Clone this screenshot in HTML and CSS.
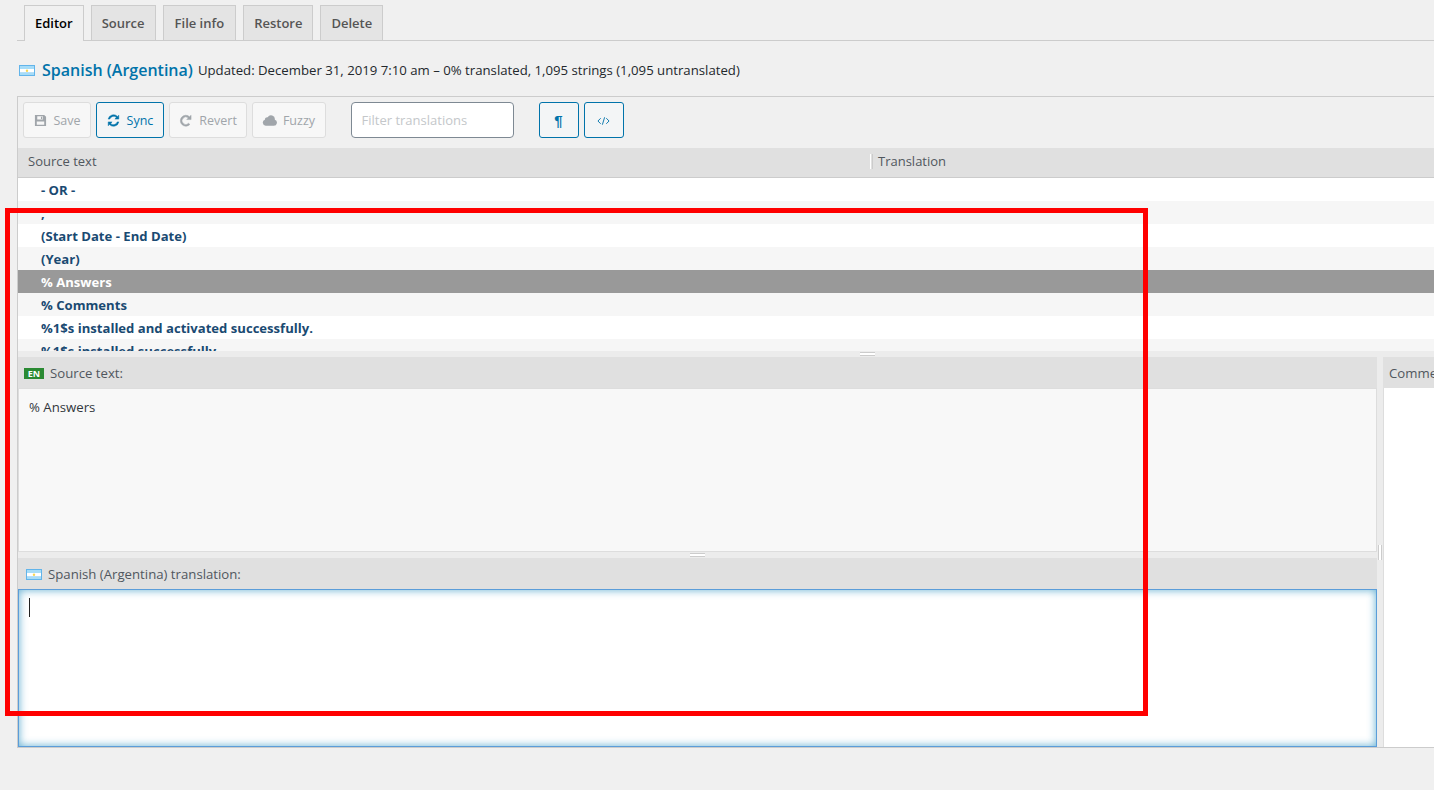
FILE: index.html
```html
<!DOCTYPE html>
<html lang="en">
<head>
    <meta charset="UTF-8">
    <meta name="viewport" content="width=device-width, initial-scale=1.0">
    <title>Edit translation</title>
    <link rel="stylesheet" href="styles.css">
</head>
<body>

<svg class="defs" width="0" height="0">
    <symbol id="flag-ar" viewBox="0 0 16 11">
        <rect width="16" height="11" fill="#62b4ea"/>
        <rect x="1" y="1" width="14" height="3" fill="#a6dcf8"/>
        <rect x="1" y="4" width="14" height="3.6" fill="#fff"/>
        <rect x="1" y="7.600" width="14" height="2.400" fill="#a6dcf8"/>
        <circle cx="8" cy="5.700" r="1.200" fill="#f7d654"/>
    </symbol>
</svg>

<nav class="tabs">
    <a class="tab active">Editor</a>
    <a class="tab">Source</a>
    <a class="tab wide">File info</a>
    <a class="tab">Restore</a>
    <a class="tab">Delete</a>
</nav>

<div class="heading">
    <svg class="flag"><use href="#flag-ar"/></svg>
    <a class="locale">Spanish (Argentina)</a>
    <span class="stats">Updated: December 31, 2019 7:10 am – 0% translated, 1,095 strings (1,095 untranslated)</span>
</div>

<div class="editor">
    <div class="toolbar">
        <button class="button disabled">
            <svg class="icon" viewBox="0 0 14 14"><path fill-rule="evenodd" d="M1 1h10l2 2v10H1zM3.500 2.500v3.500h6V2.500zM7.500 3h1.300v2.300H7.500zM3 8v3.500h8V8z"/></svg>
            Save
        </button>
        <button class="button primary">
            <svg class="icon" viewBox="0 0 14 14"><path stroke="currentColor" stroke-width=".5" d="M12.700 1.300v4.200H8.500l1.600-1.600A4.200 4.200 0 0 0 3 5.500H1.200A6 6 0 0 1 11.400 2.600zM1.300 12.700V8.500h4.200l-1.600 1.600A4.200 4.200 0 0 0 11 8.500h1.800A6 6 0 0 1 2.600 11.400z"/></svg>
            Sync
        </button>
        <button class="button disabled">
            <svg class="icon" viewBox="0 0 14 14"><path stroke="currentColor" stroke-width=".5" d="M13 1.300v4.700H8.300l1.700-1.700A4 4 0 1 0 10.300 10l1.400 1.200A5.900 5.900 0 1 1 11.300 2.900z"/></svg>
            Revert
        </button>
        <button class="button disabled">
            <svg class="icon cloud" viewBox="0 0 14 14"><path d="M3.500 12A3 3 0 0 1 2.700 6.200 2.200 2.200 0 0 1 5.300 4 3.600 3.600 0 0 1 12 6.200 3 3 0 0 1 11 12z"/></svg>
            Fuzzy
        </button>
        <div class="filter">Filter translations</div>
        <button class="button square pilcrow">¶</button>
        <button class="button square">
            <svg class="code" viewBox="0 0 14 10" fill="none" stroke="currentColor"><path d="M4 2 1 5l3 3M10 2l3 3-3 3M8.200 1 5.800 9"/></svg>
        </button>
    </div>

    <div class="list-head">
        <div class="col-source">Source text</div>
        <div class="col-target">Translation</div>
    </div>

    <div class="list">
        <div class="row">- OR -</div>
        <div class="row">,</div>
        <div class="row">(Start Date - End Date)</div>
        <div class="row">(Year)</div>
        <div class="row selected">% Answers</div>
        <div class="row">% Comments</div>
        <div class="row">%1$s installed and activated successfully.</div>
        <div class="row">%1$s installed successfully.</div>
    </div>

    <div class="split-h"><span class="grip"></span></div>

    <div class="panes">
        <div class="pane-main">
            <div class="pane-head"><span class="badge">EN</span>Source text:</div>
            <div class="source-body">% Answers</div>
            <div class="split-h"><span class="grip"></span></div>
            <div class="pane-head">
                <svg class="flag"><use href="#flag-ar"/></svg>
                Spanish (Argentina) translation:
            </div>
            <div class="target-body"><span class="caret"></span></div>
        </div>
        <div class="split-v"><span class="grip-v"></span></div>
        <div class="pane-side">
            <div class="pane-head">Comments</div>
            <div class="side-body"></div>
        </div>
    </div>
</div>

<div class="highlight"></div>

</body>
</html>
```

FILE: styles.css
```css
html, body {
    height: 100%;
    overflow: hidden;
}
body {
    margin: 0;
    padding-top: 5px;
    box-sizing: border-box;
    background-color: #f0f0f0;
    color: #32373c;
    font-family: "Open Sans", Arial, sans-serif;
    font-size: 13.2px;
}
.defs {
    position: absolute;
}
.tabs {
    display: flex;
    gap: 7px;
    margin-left: 17px;
    padding-left: 7px;
    height: 35px;
    border-bottom: 1px solid #ccc;
}
.tab {
    height: 34px;
    line-height: 35px;
    padding: 0 10px;
    border: 1px solid #ccc;
    border-bottom: none;
    background-color: #e4e4e4;
    color: #555;
    font-size: 13px;
    font-weight: 600;
}
.tab.wide {
    padding: 0 11px;
}
.tab.active {
    height: 35px;
    background-color: #f0f0f0;
    color: #000;
}
.heading {
    display: flex;
    align-items: center;
    height: 55px;
    padding-top: 3px;
    box-sizing: border-box;
    margin-left: 19px;
}
.flag {
    width: 16px;
    height: 11px;
    flex: none;
}
.locale {
    margin: 0 5px 0 7px;
    color: #0073aa;
    font-size: 16px;
    font-weight: 600;
}
.stats {
    color: #23282d;
}
.editor {
    width: 1698px;
    margin-left: 17px;
    border-top: 1px solid #ccc;
    border-left: 1px solid #ccc;
    border-bottom: 1px solid #ccc;
}
.toolbar {
    display: flex;
    align-items: flex-start;
    gap: 5px;
    height: 51px;
    padding: 5px;
    box-sizing: border-box;
}
.button {
    display: flex;
    align-items: center;
    justify-content: center;
    gap: 7px;
    height: 36px;
    padding: 0 9.5px;
    border: 1px solid #0073aa;
    border-radius: 3px;
    background-color: #f3f5f6;
    color: #0073aa;
    font-family: inherit;
    font-size: 12.5px;
}
.button.disabled {
    border-color: #ddd;
    background-color: #f7f7f7;
    color: #a0a5aa;
}
.icon {
    width: 13px;
    height: 13px;
    fill: currentColor;
}
.icon.cloud {
    width: 15px;
    height: 15px;
    margin: 0 -1px;
}
.square {
    width: 40px;
    padding: 0;
}
.pilcrow {
    margin-left: 20px;
    font-family: "Liberation Sans", Arial, sans-serif;
    font-size: 15px;
    font-weight: 700;
}
.code {
    width: 13px;
    height: 10px;
    margin-top: 2px;
}
.filter {
    width: 163px;
    height: 36px;
    line-height: 34px;
    margin-left: 20px;
    padding-left: 10px;
    box-sizing: border-box;
    border: 1px solid #7e8993;
    border-radius: 4px;
    background-color: #fff;
    color: #c4c7ca;
    font-size: 13px;
}
.list-head {
    display: flex;
    height: 29px;
    line-height: 27px;
    border-bottom: 1px solid #ccc;
    background-color: #e0e0e0;
    color: #50575e;
    font-size: 13px;
}
.col-source {
    width: 843px;
    padding-left: 10px;
}
.col-target {
    padding-left: 7px;
    position: relative;
}
.col-target::before {
    content: "";
    position: absolute;
    left: -1px;
    top: 6px;
    width: 1px;
    height: 15px;
    border-left: 1px solid #fff;
    border-right: 1px solid #ccc;
}
.list {
    height: 173px;
    overflow: hidden;
    background-color: #fff;
}
.row {
    height: 23px;
    line-height: 25px;
    padding-left: 23px;
    color: #1a4a72;
    font-size: 13.1px;
    font-weight: 700;
}
.row:nth-child(even) {
    background-color: #f6f6f6;
}
.row.selected {
    background-color: #999;
    color: #fff;
}
.split-h {
    display: flex;
    justify-content: center;
    flex: none;
    height: 6px;
    background-color: #ececec;
}
.grip {
    width: 15px;
    height: 4px;
    margin-top: 1px;
    box-sizing: border-box;
    border-top: 1px solid #ccc;
    border-bottom: 1px solid #ccc;
    background-color: #fff;
}
.panes {
    display: flex;
    height: 390px;
}
.pane-main {
    display: flex;
    flex-direction: column;
    flex: none;
    width: 1359px;
}
.pane-head {
    display: flex;
    align-items: center;
    flex: none;
    height: 31px;
    padding: 1px 0 0 6px;
    box-sizing: border-box;
    background-color: #e0e0e0;
    color: #50575e;
}
.pane-head .flag {
    margin: 0 6px 0 2px;
}
.badge {
    width: 20px;
    height: 11px;
    line-height: 11px;
    margin-right: 6px;
    background-color: #2a8a33;
    color: #fff;
    font-size: 9px;
    font-weight: 700;
    text-align: center;
}
.source-body {
    height: 164px;
    flex: none;
    box-sizing: border-box;
    padding: 10px;
    border: 1px solid #ddd;
    background-color: #f8f8f8;
    line-height: 17px;
}
.target-body {
    flex: 1;
    padding: 8px 10px;
    border: 1px solid #5b9dd9;
    background-color: #fff;
    box-shadow: inset 0 0 8px rgba(30, 140, 190, .7);
}
.caret {
    display: block;
    width: 1px;
    height: 19px;
    background-color: #222;
}
.split-v {
    display: flex;
    justify-content: center;
    align-items: flex-start;
    width: 6px;
    flex: none;
    background-color: #ececec;
}
.grip-v {
    width: 4px;
    height: 15px;
    margin-top: 188px;
    border-left: 1px solid #ccc;
    border-right: 1px solid #ccc;
    background-color: #fff;
    box-sizing: border-box;
}
.pane-side {
    display: flex;
    flex-direction: column;
    flex: 1;
}
.side-body {
    flex: 1;
    border-left: 1px solid #ddd;
    background-color: #fff;
}
.highlight {
    position: absolute;
    left: 5px;
    top: 208px;
    width: 1133px;
    height: 498px;
    border: 5px solid #f00;
    pointer-events: none;
}
```
